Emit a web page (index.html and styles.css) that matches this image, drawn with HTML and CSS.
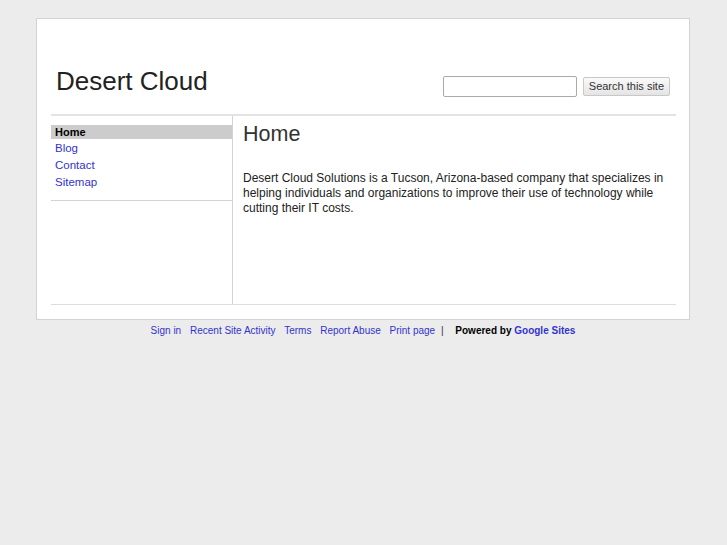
FILE: index.html
```html
<!DOCTYPE html>
<html>
<head>
<meta charset="utf-8">
<title>Desert Cloud</title>
<link rel="stylesheet" href="styles.css">
</head>
<body>
<div class="page">
  <div class="header">
    <div class="site-title">Desert Cloud</div>
    <form class="search">
      <input class="search-input" type="text">
      <button class="search-btn" type="button">Search this site</button>
    </form>
  </div>
  <div class="main">
    <div class="sidebar">
      <ul class="nav">
        <li class="nav-item current">Home</li>
        <li class="nav-item"><a href="#">Blog</a></li>
        <li class="nav-item"><a href="#">Contact</a></li>
        <li class="nav-item"><a href="#">Sitemap</a></li>
      </ul>
    </div>
    <div class="content">
      <h1 class="page-title">Home</h1>
      <p class="text">Desert Cloud Solutions is a Tucson, Arizona-based company that specializes in helping individuals and organizations to improve their use of technology while cutting their IT costs.</p>
    </div>
  </div>
</div>
<div class="footer">
  <a href="#">Sign in</a>
  <a href="#">Recent Site Activity</a>
  <a href="#">Terms</a>
  <a href="#">Report Abuse</a>
  <a class="last" href="#">Print page</a>
  <span class="sep">|</span>
  <span class="powered">Powered by <a href="#">Google Sites</a></span>
</div>
</body>
</html>
```
FILE: styles.css
```css
html, body {
  margin: 0;
  padding: 0;
  background: #ececec;
  font-family: "Liberation Sans", Arial, sans-serif;
  color: #222;
}
body {
  padding: 18px 36px 0 36px;
  width: 654px;
}
.page {
  background: #fff;
  border: 1px solid #d3d3d3;
  padding: 0 13px 14px 14px;
  height: 286px;
}
.header {
  display: flex;
  justify-content: space-between;
  align-items: flex-end;
  height: 95px;
  border-bottom: 2px solid #e3e3e3;
}
.site-title {
  font-size: 26px;
  color: #222;
  padding-left: 5px;
  padding-bottom: 18px;
  line-height: 30px;
}
.search {
  display: flex;
  align-items: center;
  gap: 6px;
  padding-bottom: 17px;
  padding-right: 6px;
  margin: 0;
}
.search-input {
  width: 128px;
  height: 17px;
  border: 1px solid #aaa;
  border-radius: 2px;
  padding: 1px 2px;
  margin: 0;
  font-size: 12px;
}
.search-btn {
  height: 19px;
  border: 1px solid #c8c8c8;
  border-radius: 2px;
  background: linear-gradient(#fafafa, #e4e4e4);
  font-family: "Liberation Sans", Arial, sans-serif;
  font-size: 11px;
  color: #333;
  padding: 0 5px;
  margin: 0;
  line-height: 17px;
}
.main {
  display: flex;
  height: 188px;
  border-bottom: 1px solid #ddd;
}
.sidebar {
  width: 181px;
  border-right: 1px solid #d3d3d3;
  flex: none;
  align-self: stretch;
}
.nav {
  list-style: none;
  margin: 0;
  padding: 9px 0 10px 0;
  border-bottom: 1px solid #d3d3d3;
  height: 65px;
}
.nav-item {
  font-size: 11.5px;
  line-height: 17px;
  padding-left: 4px;
}
.nav-item.current {
  background: #cccccc;
  font-weight: bold;
  font-size: 11px;
  line-height: 14px;
  color: #000;
  margin-bottom: 1px;
}
.nav-item a {
  color: #3333cc;
  text-decoration: none;
}
.content {
  flex: 1;
  padding: 5px 8px 0 10px;
}
.page-title {
  font-size: 21.5px;
  font-weight: normal;
  color: #333;
  margin: 0;
  line-height: 26px;
}
.text {
  font-size: 12px;
  line-height: 15px;
  margin: 24px 0 0 0;
  color: #222;
}
.footer {
  text-align: center;
  font-size: 10px;
  padding-top: 5px;
  color: #333;
}
.footer a {
  color: #3333cc;
  text-decoration: none;
  margin-right: 6px;
}
.footer a.last {
  margin-right: 3px;
}
.footer .sep {
  margin-right: 9px;
}
.footer .powered {
  font-weight: bold;
  color: #000;
}
.footer .powered a {
  margin-right: 0;
}
```
